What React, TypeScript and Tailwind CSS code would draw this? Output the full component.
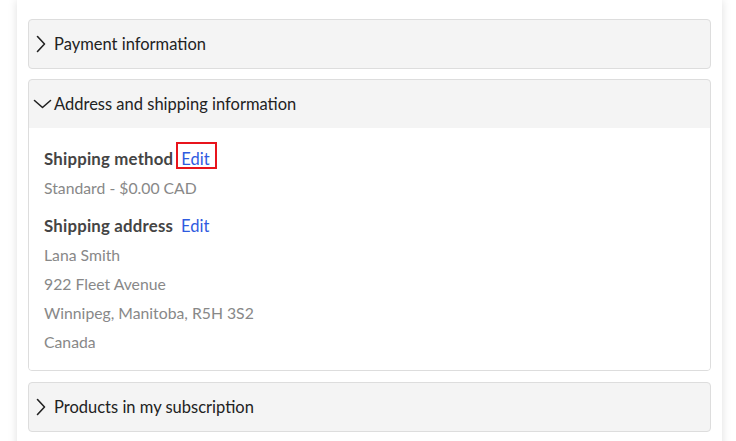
import { ReactNode } from "react"

function ChevronRight() {
  return (
    <svg width="10" height="18" viewBox="0 0 10 18" fill="none" className="shrink-0">
      <path d="M1.5 1.5 L8.5 9 L1.5 16.5" stroke="#222" strokeWidth="1.6" strokeLinecap="round" strokeLinejoin="round" />
    </svg>
  )
}

function ChevronDown() {
  return (
    <svg width="19" height="10" viewBox="0 0 19 10" fill="none" className="shrink-0">
      <path d="M1.5 1.5 L9.5 8.5 L17.5 1.5" stroke="#222" strokeWidth="1.6" strokeLinecap="round" strokeLinejoin="round" />
    </svg>
  )
}

function Section({ title, open, children }: { title: string; open?: boolean; children?: ReactNode }) {
  return (
    <div className="overflow-hidden rounded-[4px] border border-[#dddddd] bg-[#f4f4f4]">
      <div className="flex h-[48px] items-center">
        {open ? (
          <div className="flex w-[25px] justify-start pl-[4px]">
            <ChevronDown />
          </div>
        ) : (
          <div className="flex w-[25px] justify-start pl-[7px]">
            <ChevronRight />
          </div>
        )}
        <span className="text-[16.5px] text-[#222222]">{title}</span>
      </div>
      {open && <div className="bg-white px-[15px] pt-[16px] pb-[14px]">{children}</div>}
    </div>
  )
}

function Label({ children, boxed }: { children: ReactNode; boxed?: boolean }) {
  return (
    <div className="flex h-[29px] items-center gap-[8px]">
      <span className="text-[16.8px] font-bold tracking-[0.2px] text-[#444444]">{children}</span>
      <a href="#" className="relative leading-6 text-[#2f5be0]">
        Edit
        {boxed && (
          <span className="pointer-events-none absolute -top-[5px] bottom-[2px] -left-[5px] -right-[7px] border-2 border-[#e8141c]" />
        )}
      </a>
    </div>
  )
}

function Line({ children }: { children: ReactNode }) {
  return <div className="flex h-[29px] items-center text-[15.75px] text-[#888888]">{children}</div>
}

export default function App() {
  return (
    <div className="h-[441px] overflow-hidden bg-white font-['Lato','Noto_Sans',sans-serif] text-[16.5px]">
      <div className="ml-[17px] flex min-h-[480px] w-[705px] flex-col gap-[10px] bg-white px-[11px] pt-[19px] shadow-[0_0_9px_rgba(0,0,0,0.13)]">
        <Section title="Payment information" />
        <Section title="Address and shipping information" open>
          <Label boxed>Shipping method</Label>
          <Line>Standard - $0.00 CAD</Line>
          <div className="h-[9px]" />
          <Label>Shipping address</Label>
          <Line>Lana Smith</Line>
          <Line>922 Fleet Avenue</Line>
          <Line>Winnipeg, Manitoba, R5H 3S2</Line>
          <Line>Canada</Line>
        </Section>
        <div className="-mt-[9px] pt-[10px]">
          <Section title="Products in my subscription" />
        </div>
      </div>
    </div>
  )
}
